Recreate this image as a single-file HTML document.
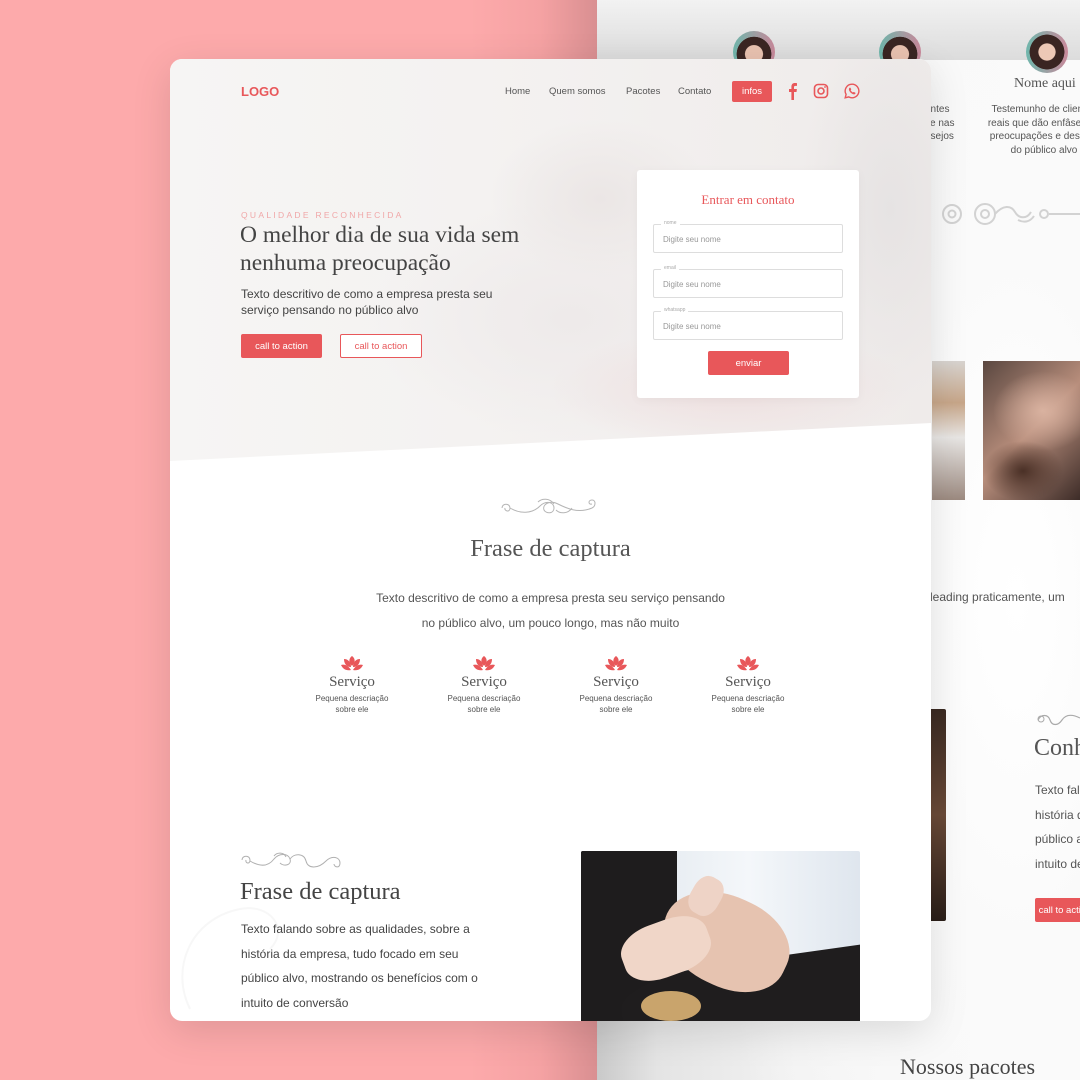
<!DOCTYPE html>
<html><head><meta charset="utf-8">
<style>
*{margin:0;padding:0;box-sizing:border-box}
body{width:1080px;height:1080px;overflow:hidden;position:relative;font-family:"Liberation Sans",sans-serif;background:#fff}
.abs{position:absolute}
.serif{font-family:"Liberation Serif",serif}
.btn{position:absolute;background:#e8575a;color:#fff;border-radius:2px;font-size:9.5px;display:flex;align-items:center;justify-content:center;white-space:nowrap}
</style></head><body>
<div class="abs" style="left:0;top:0;width:597px;height:1080px;background:linear-gradient(90deg,#fdaaab 0,#fdaaab 470px,#f5a2a3 540px,#d98f91 597px)"></div>
<div class="abs" style="left:597px;top:0;width:483px;height:1080px;background:radial-gradient(ellipse 320px 900px at 420px 600px,#fff 0,#fafafa 40%,rgba(255,255,255,0) 100%),linear-gradient(90deg,#c9c9c9 0,#e4e4e4 60px,#f2f2f2 200px,#fbfbfb 483px)"></div>
<div class="abs" style="left:597px;top:0;width:483px;height:60px;background:linear-gradient(180deg,#f2f2f2,#dcdcdc)"></div>

<div class="abs" style="left:733px;top:31px;width:42px;height:42px;border-radius:50%;background:radial-gradient(circle at 50% 55%,#e9c2b0 0 28%,#3a2522 30% 55%,transparent 56%),linear-gradient(90deg,#6fb7ac,#c9889a)"></div>
<div class="abs" style="left:879px;top:31px;width:42px;height:42px;border-radius:50%;background:radial-gradient(circle at 50% 55%,#e9c2b0 0 28%,#3a2522 30% 55%,transparent 56%),linear-gradient(90deg,#6fb7ac,#c9889a)"></div>
<div class="abs" style="left:1026px;top:31px;width:42px;height:42px;border-radius:50%;background:radial-gradient(circle at 50% 50%,#edc8b6 0 28%,#3a2522 30% 58%,transparent 59%),linear-gradient(90deg,#6fb7ac,#c9889a)"></div>
<div class="abs serif" style="left:1014px;top:76px;font-size:14px;color:#555;white-space:nowrap">Nome aqui</div>
<div class="abs" style="left:984px;top:103px;width:120px;font-size:10px;line-height:13.5px;color:#555;text-align:center;white-space:nowrap">Testemunho de clientes<br>reais que dão enfâse nas<br>preocupações e desejos<br>do público alvo</div>
<div class="abs" style="left:925px;top:103px;font-size:10px;line-height:13.5px;color:#555;white-space:nowrap">entes<br>se nas<br>esejos<br>o</div>
<svg class="abs" style="left:930px;top:200px" width="150" height="28" viewBox="0 0 150 28"><g fill="none" stroke="#d2d2d2" stroke-width="2"><circle cx="22" cy="14" r="9"/><circle cx="22" cy="14" r="3.5"/><circle cx="55" cy="14" r="10"/><circle cx="55" cy="14" r="4"/><path d="M65 14c8-9 16-9 20-2s12 7 16 0M88 20c6 3 12 2 16-4"/><circle cx="114" cy="14" r="4"/><path d="M119 14h31"/></g></svg>
<div class="abs" style="left:932px;top:361px;width:33px;height:139px;background:linear-gradient(180deg,#d8d4d0,#c7a689 30%,#e8e6e4 55%,#9c8a80 100%)"></div>
<div class="abs" style="left:983px;top:361px;width:97px;height:139px;background:radial-gradient(ellipse 40px 30px at 40px 110px,#4a3026,transparent),radial-gradient(ellipse 50px 40px at 60px 50px,#d9b2a0,transparent),linear-gradient(135deg,#5a4740,#b88e7c 50%,#3d2c28)"></div>
<div class="abs" style="left:930px;top:590px;font-size:12px;color:#555;white-space:nowrap">leading praticamente, um</div>
<div class="abs" style="left:931px;top:709px;width:15px;height:212px;background:linear-gradient(180deg,#3a2a22,#6a4a38 50%,#2a1e18);border-radius:0 2px 2px 0"></div>
<svg class="abs" style="left:1034px;top:708px" width="46" height="20"><path d="M4 12c3-6 10-6 12 0s8 6 12 0 10-6 18-2" fill="none" stroke="#aaa" stroke-width="1.2"/><circle cx="7" cy="11" r="3" fill="none" stroke="#aaa"/></svg>
<div class="abs serif" style="left:1034px;top:735px;font-size:24px;color:#555;white-space:nowrap">Conhe</div>
<div class="abs" style="left:1035px;top:778px;font-size:12px;line-height:24.5px;color:#555;white-space:nowrap">Texto falando<br>história da<br>público alvo<br>intuito de</div>
<div class="btn" style="left:1035px;top:898px;width:60px;height:24px">call to action</div>
<div class="abs serif" style="left:900px;top:1054px;font-size:22px;color:#444;white-space:nowrap">Nossos pacotes</div>

<div class="abs" style="left:170px;top:59px;width:761px;height:962px;background:#fff;border-radius:12px;overflow:hidden;box-shadow:0 10px 40px rgba(0,0,0,.12)">
  <div class="abs" style="left:0;top:0;width:761px;height:405px;clip-path:polygon(0 0,100% 0,100% 364px,0 402px);background:
    radial-gradient(ellipse 110px 80px at 430px 140px,#ebe6e5,transparent),
    radial-gradient(ellipse 180px 60px at 560px 330px,#eedfdf,transparent),
    radial-gradient(ellipse 90px 200px at 720px 150px,#e6e3e3,transparent),
    radial-gradient(ellipse 200px 120px at 400px 260px,#eeeaea,transparent),
    linear-gradient(90deg,#f6f5f4 0,#f4f2f1 40%,#efebea 100%)"></div>
  <div class="abs" style="left:71px;top:25px;font-size:13px;font-weight:bold;color:#e8575a">LOGO</div>
  <div class="abs" style="left:335px;top:27px;font-size:9.5px;color:#555;white-space:nowrap">Home</div>
  <div class="abs" style="left:379px;top:27px;font-size:9.5px;color:#555;white-space:nowrap">Quem somos</div>
  <div class="abs" style="left:456px;top:27px;font-size:9.5px;color:#555;white-space:nowrap">Pacotes</div>
  <div class="abs" style="left:508px;top:27px;font-size:9.5px;color:#555;white-space:nowrap">Contato</div>
  <div class="btn" style="left:562px;top:22px;width:40px;height:21px">infos</div>
  <svg class="abs" style="left:616px;top:24px" width="14" height="17" viewBox="0 0 14 17"><path d="M8 17V9h2.5l.4-3H8V4.3c0-.8.3-1.4 1.4-1.4H11V.2C10.6.1 9.8 0 8.9 0 6.8 0 5.4 1.3 5.4 3.6V6H3v3h2.4v8z" fill="#e8575a"/></svg>
  <svg class="abs" style="left:643px;top:24px" width="16" height="16" viewBox="0 0 16 16"><rect x="1.5" y="1.5" width="13" height="13" rx="3.5" fill="none" stroke="#e8575a" stroke-width="1.6"/><circle cx="8" cy="8" r="3" fill="none" stroke="#e8575a" stroke-width="1.6"/><circle cx="12" cy="4" r=".9" fill="#e8575a"/></svg>
  <svg class="abs" style="left:674px;top:24px" width="16" height="16" viewBox="0 0 16 16"><path d="M8 1.2a6.8 6.8 0 0 0-5.9 10.2L1.2 14.8l3.5-.9A6.8 6.8 0 1 0 8 1.2z" fill="none" stroke="#e8575a" stroke-width="1.4"/><path d="M5.6 4.8c.4-.3.8-.2 1 .2l.6 1.3c.1.3-.3.7-.5 1 .5 1 1.2 1.7 2.2 2.2.3-.2.6-.7 1-.5l1.3.6c.4.2.4.7.1 1.1-.6.7-1.5.8-2.5.4C7.1 10.4 5.8 9 5.1 7.4c-.4-1-.2-2 .5-2.6z" fill="#e8575a"/></svg>

  <div class="abs" style="left:71px;top:151px;font-size:8.5px;letter-spacing:2.3px;color:#f0a7a8">QUALIDADE RECONHECIDA</div>
  <div class="abs serif" style="left:70px;top:162px;font-size:23.5px;line-height:28px;color:#444;white-space:nowrap">O melhor dia de sua vida sem<br>nenhuma preocupação</div>
  <div class="abs" style="left:71px;top:228px;font-size:12px;line-height:15.5px;color:#444;white-space:nowrap">Texto descritivo de como a empresa presta seu<br>serviço pensando no público alvo</div>
  <div class="btn" style="left:71px;top:275px;width:81px;height:24px">call to action</div>
  <div class="btn" style="left:170px;top:275px;width:82px;height:24px;border:1px solid #e8575a;color:#e8575a;background:#fff">call to action</div>

  <div class="abs" style="left:467px;top:111px;width:222px;height:228px;background:#fff;border-radius:3px;box-shadow:0 2px 10px rgba(0,0,0,.04)">
    <div class="abs serif" style="left:0;top:22px;width:222px;text-align:center;font-size:13px;color:#e8575a">Entrar em contato</div>
    <div class="abs" style="left:16px;top:54px;width:190px;height:29px;border:1px solid #ddd;border-radius:2px"></div>
    <div class="abs" style="left:24px;top:50px;font-size:5px;color:#aaa;background:#fff;padding:0 3px">nome</div>
    <div class="abs" style="left:26px;top:65px;font-size:8px;color:#999">Digite seu nome</div>
    <div class="abs" style="left:16px;top:99px;width:190px;height:29px;border:1px solid #ddd;border-radius:2px"></div>
    <div class="abs" style="left:24px;top:95px;font-size:5px;color:#aaa;background:#fff;padding:0 3px">email</div>
    <div class="abs" style="left:26px;top:110px;font-size:8px;color:#999">Digite seu nome</div>
    <div class="abs" style="left:16px;top:141px;width:190px;height:29px;border:1px solid #ddd;border-radius:2px"></div>
    <div class="abs" style="left:24px;top:137px;font-size:5px;color:#aaa;background:#fff;padding:0 3px">whatsapp</div>
    <div class="abs" style="left:26px;top:152px;font-size:8px;color:#999">Digite seu nome</div>
    <div class="btn" style="left:71px;top:181px;width:81px;height:24px">enviar</div>
  </div>

  <svg class="abs" style="left:328px;top:437px" width="104" height="22" viewBox="0 0 104 22"><g fill="none" stroke="#b5b5b5" stroke-width="1"><path d="M4 12c0-5 8-5 8 0s-6 3-5 0M12 12c10 6 22 6 30-2 6-6 14-4 14 2s-8 6-10 2c-2-6 6-10 14-6 8 4 20 10 34 4 4-2 4-8 0-8s-4 5 0 4"/><path d="M40 6c4-4 12-4 16 2M58 14c4 4 12 4 16-2"/></g></svg>
  <div class="abs serif" style="left:0;top:476px;width:761px;text-align:center;font-size:24.5px;color:#555">Frase de captura</div>
  <div class="abs" style="left:0;top:527px;width:761px;text-align:center;font-size:12px;line-height:24.5px;color:#555">Texto descritivo de como a empresa presta seu serviço pensando<br>no público alvo, um pouco longo, mas não muito</div>

  <div class="abs" style="left:132px;top:597px;width:100px;text-align:center">
    <svg width="22" height="16" viewBox="0 0 22 16"><g fill="#e8575a"><path d="M11 0c3 2 4 6 0 10-4-4-3-8 0-10z"/><path d="M3 3c4 0 7 3 7 8C5 11 3 7 3 3z"/><path d="M19 3c-4 0-7 3-7 8 5 0 7-4 7-8z"/><path d="M0 9c3-1 7 0 10 5-5 1-8-1-10-5zM22 9c-3-1-7 0-10 5 5 1 8-1 10-5z"/></g></svg>
    <div class="serif" style="font-size:15px;color:#555;margin-top:-3px">Serviço</div>
    <div style="font-size:8px;line-height:11px;color:#555;margin-top:2px">Pequena descriação<br>sobre ele</div>
  </div>
  <div class="abs" style="left:264px;top:597px;width:100px;text-align:center">
    <svg width="22" height="16" viewBox="0 0 22 16"><g fill="#e8575a"><path d="M11 0c3 2 4 6 0 10-4-4-3-8 0-10z"/><path d="M3 3c4 0 7 3 7 8C5 11 3 7 3 3z"/><path d="M19 3c-4 0-7 3-7 8 5 0 7-4 7-8z"/><path d="M0 9c3-1 7 0 10 5-5 1-8-1-10-5zM22 9c-3-1-7 0-10 5 5 1 8-1 10-5z"/></g></svg>
    <div class="serif" style="font-size:15px;color:#555;margin-top:-3px">Serviço</div>
    <div style="font-size:8px;line-height:11px;color:#555;margin-top:2px">Pequena descriação<br>sobre ele</div>
  </div>
  <div class="abs" style="left:396px;top:597px;width:100px;text-align:center">
    <svg width="22" height="16" viewBox="0 0 22 16"><g fill="#e8575a"><path d="M11 0c3 2 4 6 0 10-4-4-3-8 0-10z"/><path d="M3 3c4 0 7 3 7 8C5 11 3 7 3 3z"/><path d="M19 3c-4 0-7 3-7 8 5 0 7-4 7-8z"/><path d="M0 9c3-1 7 0 10 5-5 1-8-1-10-5zM22 9c-3-1-7 0-10 5 5 1 8-1 10-5z"/></g></svg>
    <div class="serif" style="font-size:15px;color:#555;margin-top:-3px">Serviço</div>
    <div style="font-size:8px;line-height:11px;color:#555;margin-top:2px">Pequena descriação<br>sobre ele</div>
  </div>
  <div class="abs" style="left:528px;top:597px;width:100px;text-align:center">
    <svg width="22" height="16" viewBox="0 0 22 16"><g fill="#e8575a"><path d="M11 0c3 2 4 6 0 10-4-4-3-8 0-10z"/><path d="M3 3c4 0 7 3 7 8C5 11 3 7 3 3z"/><path d="M19 3c-4 0-7 3-7 8 5 0 7-4 7-8z"/><path d="M0 9c3-1 7 0 10 5-5 1-8-1-10-5zM22 9c-3-1-7 0-10 5 5 1 8-1 10-5z"/></g></svg>
    <div class="serif" style="font-size:15px;color:#555;margin-top:-3px">Serviço</div>
    <div style="font-size:8px;line-height:11px;color:#555;margin-top:2px">Pequena descriação<br>sobre ele</div>
  </div>

  <svg class="abs" style="left:0;top:800px" width="120" height="160"><path d="M20 150c-20-40 0-90 50-100 30-6 50 20 30 40" fill="none" stroke="#f7f7f7" stroke-width="2"/></svg>
  <svg class="abs" style="left:70px;top:791px" width="104" height="20" viewBox="0 0 104 20"><g fill="none" stroke="#b0b0b0" stroke-width="1"><path d="M2 10c0-5 8-5 8 0s-5 3-4 0M10 11c10 6 18 6 24-2 5-6 14-6 16 0s-6 8-10 4M50 9c4-6 14-6 16 2s12 8 20 0c6-6 14-4 14 2s-6 4-6 1"/><path d="M34 6c3-4 10-4 12 1"/></g></svg>
  <div class="abs serif" style="left:70px;top:819px;font-size:24.5px;color:#444;white-space:nowrap">Frase de captura</div>
  <div class="abs" style="left:71px;top:858px;font-size:12px;line-height:24.5px;color:#444;white-space:nowrap">Texto falando sobre as qualidades, sobre a<br>história da empresa, tudo focado em seu<br>público alvo, mostrando os benefícios com o<br>intuito de conversão</div>
  <div class="abs" style="left:411px;top:792px;width:279px;height:170px;overflow:hidden;border-radius:2px 2px 0 0;background:linear-gradient(90deg,#1d1b1c 0,#222 30%,#e9eef3 34%,#f4f7fa 60%,#dfe6ee 100%)">
    <div class="abs" style="left:0;top:0;width:96px;height:170px;background:#1e1c1d"></div>
    <div class="abs" style="left:40px;top:110px;width:250px;height:80px;background:#1f1d1e;border-radius:40% 0 0 0;transform:rotate(-8deg)"></div>
    <div class="abs" style="left:80px;top:45px;width:130px;height:90px;background:#e6c3b0;border-radius:50% 45% 45% 50%;transform:rotate(25deg)"></div>
    <div class="abs" style="left:40px;top:70px;width:90px;height:55px;background:#f0d6c8;border-radius:40%;transform:rotate(-20deg)"></div>
    <div class="abs" style="left:110px;top:25px;width:30px;height:40px;background:#eed3c6;border-radius:40%;transform:rotate(30deg)"></div>
    <div class="abs" style="left:60px;top:140px;width:60px;height:30px;background:#c9a46c;border-radius:50%"></div>
  </div>
</div>
</body></html>
